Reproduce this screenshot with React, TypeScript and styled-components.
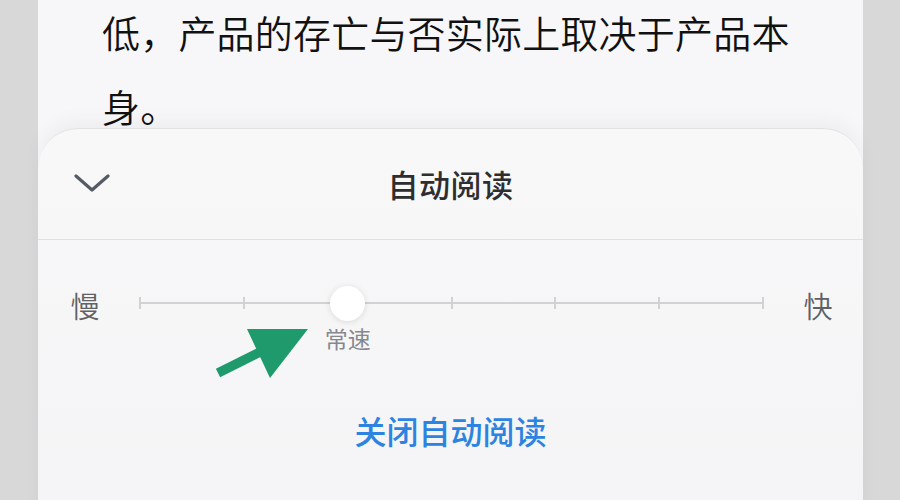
import styled, { createGlobalStyle } from "styled-components";

const GlobalStyle = createGlobalStyle`
  html, body {
    margin: 0;
    padding: 0;
    background: #d8d8d8;
  }
  body {
    font-family: "Noto Sans CJK SC", "Noto Sans", sans-serif;
  }
`;

const TICKS = 7;
const CURRENT = 2;

const App = () => {
  return (
    <>
      <GlobalStyle />
      <ScreenStyled>
        <PageStyled>
          <ArticleStyled>
            低，产品的存亡与否实际上取决于产品本
            <br />
            身。
          </ArticleStyled>

          <SheetStyled>
            <HeaderStyled>
              <CollapseButtonStyled aria-label="收起">
                <svg width="36" height="20" viewBox="0 0 36 20">
                  <path
                    d="M2 3 L18 17 L34 3"
                    fill="none"
                    stroke="#555a63"
                    strokeWidth="3.2"
                    strokeLinecap="round"
                    strokeLinejoin="round"
                  />
                </svg>
              </CollapseButtonStyled>
              <TitleStyled>自动阅读</TitleStyled>
            </HeaderStyled>

            <SpeedRowStyled>
              <SpeedLabelStyled>慢</SpeedLabelStyled>
              <TrackStyled>
                {Array.from({ length: TICKS }).map((_, i) => (
                  <TickStyled
                    key={i}
                    style={{ left: `${(i / (TICKS - 1)) * 100}%` }}
                  />
                ))}
                <ThumbWrapStyled
                  style={{ left: `${(CURRENT / (TICKS - 1)) * 100}%` }}
                >
                  <ThumbStyled />
                  <ThumbCaptionStyled>常速</ThumbCaptionStyled>
                </ThumbWrapStyled>
              </TrackStyled>
              <SpeedLabelStyled>快</SpeedLabelStyled>
            </SpeedRowStyled>

            <CloseRowStyled>
              <CloseLinkStyled>关闭自动阅读</CloseLinkStyled>
            </CloseRowStyled>
          </SheetStyled>

          <ArrowStyled width="900" height="500" viewBox="0 0 900 500">
            <line
              x1="218"
              y1="373"
              x2="262"
              y2="351"
              stroke="#1f9a6d"
              strokeWidth="9.5"
            />
            <polygon points="247,329 308,329 270,378" fill="#1f9a6d" />
          </ArrowStyled>
        </PageStyled>
      </ScreenStyled>
    </>
  );
};

export default App;

const ScreenStyled = styled.div`
  width: 900px;
  height: 500px;
  overflow: hidden;
  display: flex;
  justify-content: flex-start;
  padding-left: 38px;
  box-sizing: border-box;
`;

const PageStyled = styled.div`
  position: relative;
  width: 825px;
  height: 500px;
  background: #f7f7f9;
`;

const ArticleStyled = styled.div`
  padding: 0 0 0 64px;
  margin-top: -5px;
  font-size: 38px;
  font-weight: 350;
  line-height: 74px;
  color: #111111;
  letter-spacing: 0.2px;
`;

const SheetStyled = styled.div`
  position: absolute;
  left: 0;
  right: 0;
  top: 128px;
  bottom: -40px;
  display: flex;
  flex-direction: column;
  background: linear-gradient(180deg, #f8f8f9 0%, #f4f4f6 100%);
  border-top: 1px solid #e2e2e5;
  border-radius: 40px 40px 0 0;
  box-shadow: 0 -8px 18px rgba(0, 0, 0, 0.04);
`;

const HeaderStyled = styled.div`
  position: relative;
  height: 110px;
  display: flex;
  align-items: center;
  justify-content: center;
  border-bottom: 1px solid #e1e1e4;
`;

const CollapseButtonStyled = styled.button`
  position: absolute;
  left: 36px;
  top: 44px;
  padding: 0;
  border: none;
  background: none;
  display: flex;
  cursor: pointer;
`;

const TitleStyled = styled.h2`
  margin: 0;
  font-size: 31px;
  font-weight: 500;
  color: #2e2e30;
  letter-spacing: 0.5px;
  transform: translateY(-1px);
`;

const SpeedRowStyled = styled.div`
  display: flex;
  align-items: center;
  padding: 0 30px 0 32px;
  gap: 40px;
  height: 126px;
`;

const SpeedLabelStyled = styled.span`
  width: 30px;
  flex: none;
  font-size: 29px;
  font-weight: 350;
  color: #5f6166;
  text-align: center;
  line-height: 1;
  transform: translateY(2px);
`;

const TrackStyled = styled.div`
  position: relative;
  flex: 1;
  height: 2px;
  background: #d2d2d5;
`;

const TickStyled = styled.span`
  position: absolute;
  top: -5px;
  width: 2px;
  height: 12px;
  margin-left: -1px;
  background: #d2d2d5;
`;

const ThumbWrapStyled = styled.div`
  position: absolute;
  top: 1px;
  width: 0;
  display: flex;
  flex-direction: column;
  align-items: center;
`;

const ThumbStyled = styled.div`
  width: 35px;
  height: 35px;
  flex: none;
  margin-top: -17px;
  border-radius: 50%;
  background: #ffffff;
  box-shadow: 0 1px 6px rgba(0, 0, 0, 0.12);
`;

const ThumbCaptionStyled = styled.span`
  margin-top: 2px;
  white-space: nowrap;
  font-size: 23px;
  line-height: 30px;
  color: #86888d;
`;

const CloseRowStyled = styled.div`
  display: flex;
  justify-content: center;
  padding-top: 42px;
`;

const CloseLinkStyled = styled.button`
  padding: 0;
  border: none;
  background: none;
  font-family: inherit;
  font-size: 32px;
  font-weight: 500;
  line-height: 44px;
  color: #2d84e0;
  cursor: pointer;
`;

const ArrowStyled = styled.svg`
  position: absolute;
  left: -38px;
  top: 0;
  pointer-events: none;
`;
